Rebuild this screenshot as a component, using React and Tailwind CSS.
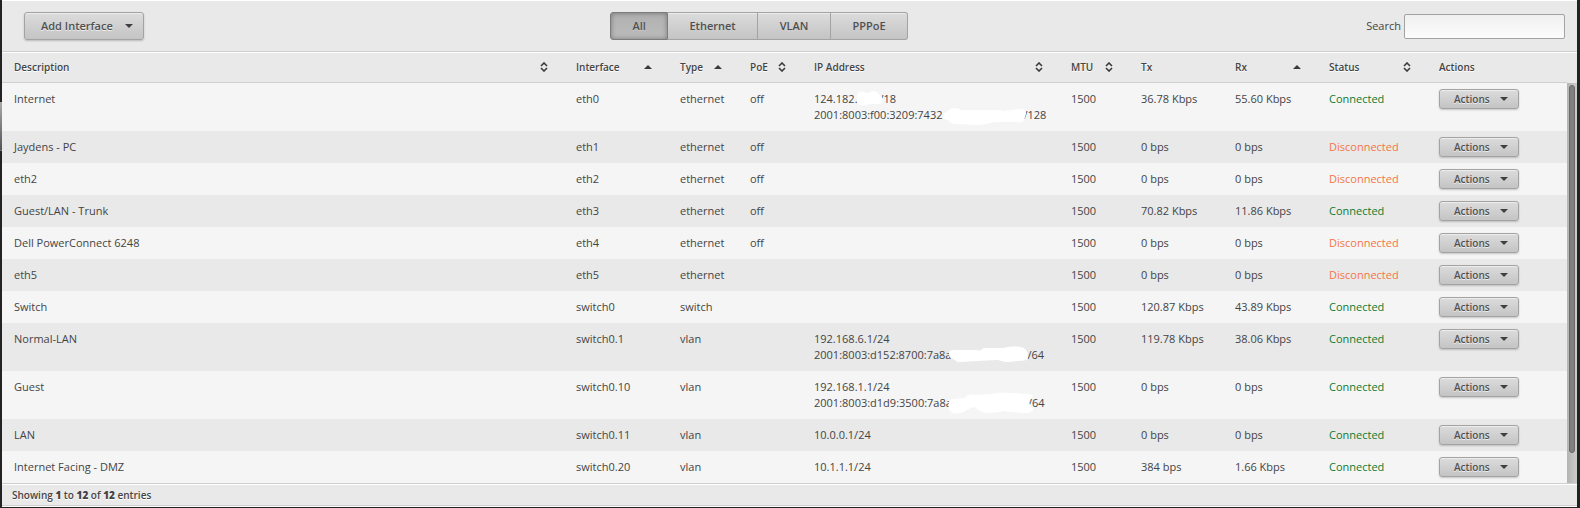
import React from 'react';

const EDGE = 'border border-[#a3a3a3] bg-linear-to-b from-[#dcdcdc] to-[#c4c4c4]';
const RAISED = 'rounded-[3px] shadow-[inset_0_1px_0_#ececec,0_1px_2px_rgba(0,0,0,0.2)]';

const COLUMNS = [
  { label: 'Description', sort: 'both', width: '' },
  { label: 'Interface', sort: 'asc', width: 'w-[104px]' },
  { label: 'Type', sort: 'asc', width: 'w-[70px]' },
  { label: 'PoE', sort: 'both', width: 'w-[64px]' },
  { label: 'IP Address', sort: 'both', width: 'w-[257px]' },
  { label: 'MTU', sort: 'both', width: 'w-[70px]' },
  { label: 'Tx', width: 'w-[94px]' },
  { label: 'Rx', sort: 'asc', width: 'w-[94px]' },
  { label: 'Status', sort: 'both', width: 'w-[110px]' },
  { label: 'Actions', width: 'w-[140px]' },
];

const MASKS = {
  eth0:
    'M43 5C43 1 48 -1 52 2C55 3 56 0 60 0C64 0 64 4 67 5C70 7 69 13 66 13H55C51 15 45 15 43 12ZM129 26C129 22 133 21 135 19C139 16 144 17 147 19H187L189 20L207 18C212 18 213 22 211 26C210 32 206 32 201 31H183C176 31 172 34 164 34L146 33C138 34 135 31 134 29C131 29 129 28 129 26Z',
  vlan1:
    'M135 22C135 19 139 19 143 19L164 19L165 20L170 17L190 17C198 15 208 15 211 18C214 20 215 26 213 29C207 30 200 30 194 31C188 31 186 29 183 29L163 30L147 31C142 32 141 28 137 27C135 26 135 24 135 22Z',
  vlan10:
    'M135 23C136 19 142 20 151 19C153 15 157 15 162 16L178 15C190 13 201 14 210 15C214 14 219 16 219 18L216 20L215 24L218 28C221 31 218 33 214 34C205 34 197 33 190 32C181 34 171 35 166 32C163 31 163 29 160 28C155 29 153 31 150 33C146 35 138 35 136 32C134 29 135 26 135 23Z',
};

const ROWS = [
  {
    description: 'Internet', name: 'eth0', type: 'ethernet', poe: 'off', mask: 'eth0',
    ips: [
      { start: '124.182.', end: '/18', gap: 'ml-[22px]' },
      { start: '2001:8003:f00:3209:7432', end: '/128', gap: 'ml-[81px]' },
    ],
    tx: '36.78 Kbps', rx: '55.60 Kbps', up: true,
  },
  { description: 'Jaydens - PC', name: 'eth1', type: 'ethernet', poe: 'off', tx: '0 bps', rx: '0 bps' },
  { description: 'eth2', name: 'eth2', type: 'ethernet', poe: 'off', tx: '0 bps', rx: '0 bps' },
  { description: 'Guest/LAN - Trunk', name: 'eth3', type: 'ethernet', poe: 'off', tx: '70.82 Kbps', rx: '11.86 Kbps', up: true },
  { description: 'Dell PowerConnect 6248', name: 'eth4', type: 'ethernet', poe: 'off', tx: '0 bps', rx: '0 bps' },
  { description: 'eth5', name: 'eth5', type: 'ethernet', tx: '0 bps', rx: '0 bps' },
  { description: 'Switch', name: 'switch0', type: 'switch', tx: '120.87 Kbps', rx: '43.89 Kbps', up: true },
  {
    description: 'Normal-LAN', name: 'switch0.1', type: 'vlan', mask: 'vlan1',
    ips: [{ start: '192.168.6.1/24' }, { start: '2001:8003:d152:8700:7a8a', end: '/64', gap: 'ml-[76px]' }],
    tx: '119.78 Kbps', rx: '38.06 Kbps', up: true,
  },
  {
    description: 'Guest', name: 'switch0.10', type: 'vlan', mask: 'vlan10',
    ips: [{ start: '192.168.1.1/24' }, { start: '2001:8003:d1d9:3500:7a8a', end: '/64', gap: 'ml-[76px]' }],
    tx: '0 bps', rx: '0 bps', up: true,
  },
  { description: 'LAN', name: 'switch0.11', type: 'vlan', ips: [{ start: '10.0.0.1/24' }], tx: '0 bps', rx: '0 bps', up: true },
  { description: 'Internet Facing - DMZ', name: 'switch0.20', type: 'vlan', ips: [{ start: '10.1.1.1/24' }], tx: '384 bps', rx: '1.66 Kbps', up: true },
];

function Caret() {
  return (
    <svg width="8" height="4" viewBox="0 0 8 4" aria-hidden="true">
      <path d="M0 0H8L4 4Z" fill="#3f3f3f" />
    </svg>
  );
}

function SortIcon({ kind }) {
  return (
    <svg width="8" height="10" viewBox="0 0 8 10" aria-hidden="true">
      {kind === 'asc' ? (
        <path d="M0 7L4 3L8 7Z" fill="#3a3a3a" />
      ) : (
        <path d="M1 4L4 1L7 4M1 6L4 9L7 6" fill="none" stroke="#3a3a3a" strokeWidth="1.6" />
      )}
    </svg>
  );
}

function Address({ ips, mask }) {
  return (
    <div className="relative whitespace-nowrap">
      {ips.map((ip) => (
        <div key={ip.start}>
          <span>{ip.start}</span>
          {ip.end && <span className={ip.gap}>{ip.end}</span>}
        </div>
      ))}
      {mask && (
        <svg className="absolute top-0 left-0 overflow-visible" width="232" height="36" viewBox="0 0 232 36" aria-hidden="true">
          <path d={MASKS[mask]} fill="#fff" />
        </svg>
      )}
    </div>
  );
}

function Toolbar() {
  return (
    <div className="flex items-center justify-between border-t border-b border-t-white border-b-[#cfcfcf] pt-[11px] pr-3 pb-[11px] pl-[22px] font-semibold text-[#505050]">
      <div className="w-32">
        <button type="button" className={`${EDGE} ${RAISED} flex h-7 w-[120px] items-center justify-between pr-[10px] pl-4 [text-shadow:0_1px_0_#eee]`}>
          Add Interface
          <Caret />
        </button>
      </div>
      <div className="flex h-7 [text-shadow:0_1px_0_#eee]" role="group" aria-label="Interface filter">
        <button type="button" aria-pressed="true" className="w-[58px] rounded-l-[3px] border border-[#7d7d7d] bg-linear-to-b from-[#b0b0b0] to-[#bcbcbc] shadow-[inset_0_0_5px_rgba(0,0,0,0.35)] [text-shadow:0_1px_0_#ccc]">
          All
        </button>
        <button type="button" className={`${EDGE} w-[90px] border-l-0 shadow-[inset_0_1px_0_#ececec]`}>Ethernet</button>
        <button type="button" className={`${EDGE} w-[73px] border-l-0 shadow-[inset_0_1px_0_#ececec]`}>VLAN</button>
        <button type="button" className={`${EDGE} w-[77px] rounded-r-[3px] border-l-0 shadow-[inset_0_1px_0_#ececec]`}>PPPoE</button>
      </div>
      <div className="flex items-center gap-[3px]">
        <label htmlFor="search" className="font-medium text-[#444]">Search</label>
        <input id="search" type="text" className="h-[25px] w-[161px] rounded-[2px] border border-[#a3a3a3] bg-linear-to-b from-[#f0f0f0] to-[#fcfcfc] px-2 outline-none" />
      </div>
    </div>
  );
}

export default function App() {
  return (
    <div className="flex bg-[#232323] pr-[3px] pb-px font-['Open_Sans',sans-serif] text-[11px] leading-4 text-[#444]">
      <div className="w-[2px] shrink-0 pt-[102px]">
        <div className="h-[49px] border-b border-[#777] bg-linear-to-b from-[#aaa] to-[#555]" />
      </div>
      <main className="min-w-0 flex-1 bg-[#e9e9e9]">
        <Toolbar />
        <div className="flex border-t border-white">
          <table className="min-w-0 flex-1 table-fixed border-separate border-spacing-0 text-left">
            <thead>
              <tr className="h-[30px]">
                {COLUMNS.map((c) => (
                  <th key={c.label} scope="col" className={`${c.width} border-b border-[#cfcfcf] pt-0 pr-4 pb-[2px] pl-3 text-[10px] font-semibold [text-shadow:0_1px_0_#fff]`}>
                    <div className="flex items-center justify-between whitespace-nowrap">
                      {c.label}
                      {c.sort && <SortIcon kind={c.sort} />}
                    </div>
                  </th>
                ))}
              </tr>
            </thead>
            <tbody>
              {ROWS.map((r) => (
                <tr key={r.name} className="align-top odd:bg-[#f5f5f5]">
                  <td className="py-2 pl-3">{r.description}</td>
                  <td className="py-2 pl-3">{r.name}</td>
                  <td className="py-2 pl-3">{r.type}</td>
                  <td className="py-2 pl-3">{r.poe}</td>
                  <td className="py-2 pl-3">{r.ips && <Address ips={r.ips} mask={r.mask} />}</td>
                  <td className="py-2 pl-3">1500</td>
                  <td className="py-2 pl-3">{r.tx}</td>
                  <td className="py-2 pl-3">{r.rx}</td>
                  <td className={`py-2 pl-3 ${r.up ? 'text-[#0f7a2c]' : 'text-[#f47646]'}`}>{r.up ? 'Connected' : 'Disconnected'}</td>
                  <td className="py-[6px] pl-3">
                    <button type="button" className={`${EDGE} ${RAISED} flex h-5 w-20 items-center justify-between pr-[10px] pl-[14px] text-[10px] font-semibold text-[#505050] [text-shadow:0_1px_0_#eee]`}>
                      Actions
                      <Caret />
                    </button>
                  </td>
                </tr>
              ))}
            </tbody>
          </table>
          <div className="mt-[30px] w-[10px] shrink-0 bg-linear-to-r from-[#b4b4b4] to-[#cccccc] px-[2px] pt-[2px]" aria-hidden="true">
            <div className="h-[368px] rounded-full border border-[#6a6a6a] bg-[#808080]" />
          </div>
        </div>
        <div className="border-t border-[#cfcfcf]">
          <div className="border-t border-b border-t-white border-b-[#cfcfcf] py-[2px] pl-[10px] text-[10px] font-semibold [text-shadow:0_1px_0_#fff]">
            Showing <b>1</b> to <b>12</b> of <b>12</b> entries
          </div>
          <div className="h-px bg-white" />
        </div>
      </main>
    </div>
  );
}
